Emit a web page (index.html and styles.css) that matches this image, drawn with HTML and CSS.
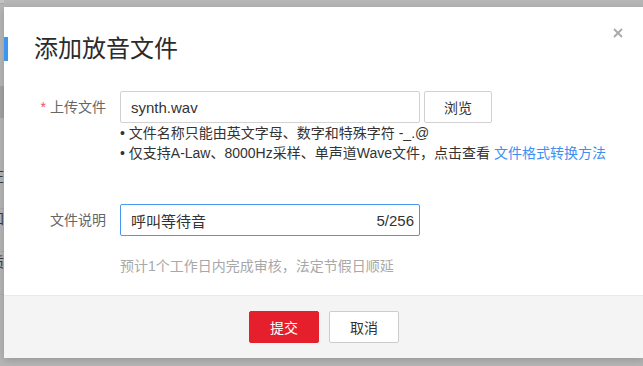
FILE: index.html
```html
<!DOCTYPE html>
<html lang="zh-CN">
<head>
    <meta charset="UTF-8">
    <title>添加放音文件</title>
    <link rel="stylesheet" href="styles.css">
</head>
<body>
<div class="page">
    <div class="side">
        <div class="side_top"></div>
        <div class="side_active"></div>
        <div class="side_item">在</div>
        <div class="side_item">知</div>
        <div class="side_item">质</div>
    </div>

    <div class="dialog">
        <span class="close_btn">
            <svg width="10" height="10" viewBox="0 0 10 10"><path d="M1 1L9 9M9 1L1 9" stroke="#a8a8a8" stroke-width="1.8"/></svg>
        </span>
        <div class="dialog_head">
            <span class="head_bar"></span>
            <span class="dialog_title">添加放音文件</span>
        </div>

        <div class="dialog_body">
            <div class="form_row">
                <label class="form_label"><span class="required">*</span>上传文件</label>
                <div class="text_input">synth.wav</div>
                <button class="browse_btn">浏览</button>
            </div>
            <div class="hints">
                <div>• 文件名称只能由英文字母、数字和特殊字符 -_.@</div>
                <div>• 仅支持A-Law、8000Hz采样、单声道Wave文件，点击查看 <a class="link">文件格式转换方法</a></div>
            </div>

            <div class="form_row row_desc">
                <label class="form_label">文件说明</label>
                <div class="text_input input_focus">
                    <span>呼叫等待音</span>
                    <span class="counter">5/256</span>
                </div>
            </div>
            <div class="notice">预计1个工作日内完成审核，法定节假日顺延</div>
        </div>

        <div class="dialog_foot">
            <button class="btn btn_submit">提交</button>
            <button class="btn btn_cancel">取消</button>
        </div>
    </div>
</div>
</body>
</html>
```

FILE: styles.css
```css
body{
    margin: 0;
    height: 366px;
    overflow: hidden;
    background-color: #b6b6b6;
    font-family: "Liberation Sans", "Noto Sans CJK SC", sans-serif;
    font-size: 14px;
    color: #333333;
}

.page{
    display: flex;
    height: 366px;
}

.side{
    width: 4px;
    flex-shrink: 0;
    overflow: hidden;
    display: flex;
    flex-direction: column;
    align-items: flex-end;
}
.side_top{
    width: 4px;
    height: 3px;
    border-bottom: 1px solid #a9a9a9;
    background-color: #c4c4c4;
    margin-bottom: 82px;
}
.side_active{
    width: 4px;
    height: 32px;
    background-color: #a3a3a3;
    margin-bottom: 48px;
}
.side_item{
    width: 14px;
    flex-shrink: 0;
    height: 42px;
    line-height: 20px;
    font-size: 14px;
    color: #3a3a3a;
    text-align: right;
    border-bottom: 1px solid #acacac;
}

.dialog{
    position: relative;
    flex-shrink: 0;
    width: 640px;
    height: 351px;
    margin-top: 7px;
    background-color: white;
    box-shadow: 0 2px 8px rgba(0, 0, 0, 0.18);
    display: flex;
    flex-direction: column;
}

.close_btn{
    position: absolute;
    top: 21px;
    right: 21px;
    width: 10px;
    height: 10px;
    line-height: 0;
}

.dialog_head{
    display: flex;
    align-items: center;
    margin-top: 30px;
    height: 24px;
}
.head_bar{
    width: 4px;
    height: 24px;
    background-color: #3d95f2;
}
.dialog_title{
    margin-left: 26px;
    font-size: 24px;
    line-height: 24px;
    color: #2b2b2b;
}

.dialog_body{
    padding-top: 30px;
    flex: 1;
}

.form_row{
    display: flex;
    align-items: center;
}
.form_label{
    width: 102px;
    padding-right: 14px;
    text-align: right;
    color: #666666;
    line-height: 20px;
}
.required{
    color: #f0535d;
    margin-right: 4px;
}
.text_input{
    box-sizing: border-box;
    width: 300px;
    height: 32px;
    padding: 0 5px 0 10px;
    border: 1px solid #d2d2d2;
    border-radius: 2px;
    display: flex;
    align-items: center;
    justify-content: space-between;
    font-size: 15px;
    color: #333333;
}
.input_focus{
    border-color: #4a97f0;
}
.counter{
    font-size: 15px;
}
.browse_btn{
    box-sizing: border-box;
    margin-left: 4px;
    width: 68px;
    height: 32px;
    background-color: white;
    border: 1px solid #d2d2d2;
    border-radius: 2px;
    font-family: inherit;
    font-size: 14px;
    color: #333333;
}

.hints{
    margin-left: 116px;
    line-height: 20px;
    color: #333333;
}
.link{
    color: #3d8ff2;
}

.row_desc{
    margin-top: 41px;
}
.notice{
    margin-left: 116px;
    margin-top: 20px;
    line-height: 20px;
    color: #a8a8a8;
}

.dialog_foot{
    height: 62px;
    border-top: 1px solid #e9e9e9;
    background-color: #f4f4f4;
    display: flex;
    justify-content: center;
    align-items: flex-start;
    gap: 10px;
    padding-top: 15px;
    box-sizing: border-box;
    height: 63px;
}
.btn{
    box-sizing: border-box;
    width: 70px;
    height: 32px;
    border-radius: 2px;
    font-family: inherit;
    font-size: 14px;
}
.btn_submit{
    background-color: #e61f2c;
    border: 1px solid #e61f2c;
    color: white;
}
.btn_cancel{
    background-color: white;
    border: 1px solid #cccccc;
    color: #333333;
}
```
